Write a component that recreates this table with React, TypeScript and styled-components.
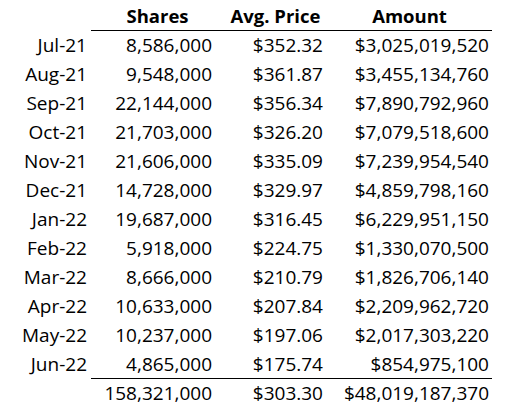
import React from "react";
import styled, { createGlobalStyle } from "styled-components";

const Global = createGlobalStyle`
  html, body {
    margin: 0;
    padding: 0;
    background: #ffffff;
  }
  body {
    font-family: "Open Sans", "Liberation Sans", sans-serif;
    color: #000;
  }
`;

const Page = styled.div`
  width: 531px;
  height: 418px;
  background: #fff;
  overflow: hidden;
`;

const Table = styled.div`
  display: grid;
  grid-template-columns: 91px 133px 103px 165px;
  grid-template-rows: 31px repeat(12, 29px) 29px;
  font-size: 19px;
  font-weight: 500;
  line-height: 29px;
`;

const HeadCell = styled.div<{ $blank?: boolean }>`
  box-sizing: border-box;
  font-weight: 700;
  font-size: 18.5px;
  text-align: center;
  padding-top: 2px;
  line-height: 28px;
  border-bottom: ${(p) => (p.$blank ? "none" : "1px solid #000")};
  white-space: nowrap;
`;

const Cell = styled.div<{ $pad: number; $last?: boolean }>`
  box-sizing: border-box;
  text-align: right;
  padding-right: ${(p) => p.$pad}px;
  white-space: nowrap;
  border-bottom: ${(p) => (p.$last ? "1px solid #000" : "none")};
`;

const LabelCell = styled.div`
  text-align: right;
  padding-right: 4px;
  white-space: nowrap;
`;

const rows: [string, string, string, string][] = [
  ["Jul-21", "8,586,000", "$352.32", "$3,025,019,520"],
  ["Aug-21", "9,548,000", "$361.87", "$3,455,134,760"],
  ["Sep-21", "22,144,000", "$356.34", "$7,890,792,960"],
  ["Oct-21", "21,703,000", "$326.20", "$7,079,518,600"],
  ["Nov-21", "21,606,000", "$335.09", "$7,239,954,540"],
  ["Dec-21", "14,728,000", "$329.97", "$4,859,798,160"],
  ["Jan-22", "19,687,000", "$316.45", "$6,229,951,150"],
  ["Feb-22", "5,918,000", "$224.75", "$1,330,070,500"],
  ["Mar-22", "8,666,000", "$210.79", "$1,826,706,140"],
  ["Apr-22", "10,633,000", "$207.84", "$2,209,962,720"],
  ["May-22", "10,237,000", "$197.06", "$2,017,303,220"],
  ["Jun-22", "4,865,000", "$175.74", "$854,975,100"],
];

const PADS = [12, 4, 3];

export default function App() {
  return (
    <Page>
      <Global />
      <Table>
        <HeadCell $blank />
        <HeadCell>Shares</HeadCell>
        <HeadCell>Avg. Price</HeadCell>
        <HeadCell>Amount</HeadCell>
        {rows.map((r, i) => {
          const last = i === rows.length - 1;
          return (
            <React.Fragment key={r[0]}>
              <LabelCell>{r[0]}</LabelCell>
              <Cell $pad={PADS[0]} $last={last}>{r[1]}</Cell>
              <Cell $pad={PADS[1]} $last={last}>{r[2]}</Cell>
              <Cell $pad={PADS[2]} $last={last}>{r[3]}</Cell>
            </React.Fragment>
          );
        })}
        <LabelCell />
        <Cell $pad={PADS[0]}>158,321,000</Cell>
        <Cell $pad={PADS[1]}>$303.30</Cell>
        <Cell $pad={PADS[2]}>$48,019,187,370</Cell>
      </Table>
    </Page>
  );
}
